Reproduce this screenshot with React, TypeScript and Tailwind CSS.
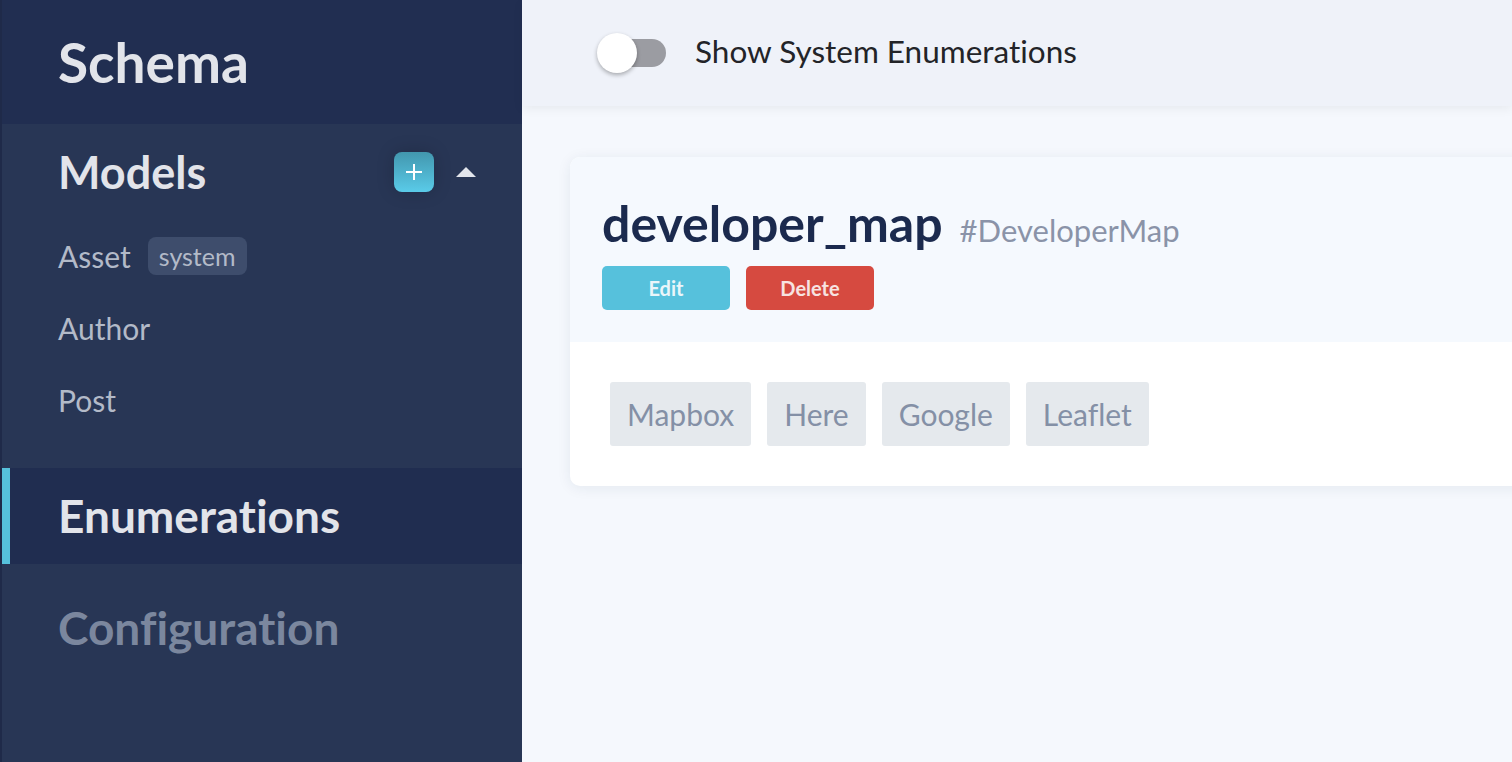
import React from "react";

function Toggle() {
  return (
    <div className="relative h-10 w-[69px] shrink-0">
      <div className="absolute left-[13px] top-[6px] h-[28px] w-[56px] rounded-full bg-[#9b9ca2]" />
      <div className="absolute left-0 top-0 h-10 w-10 rounded-full bg-white shadow-[0_2px_4px_rgba(0,0,0,0.3)]" />
    </div>
  );
}

export default function App() {
  const tags = ["Mapbox", "Here", "Google", "Leaflet"];
  return (
    <div className="flex h-[762px] w-full overflow-hidden font-['Lato',sans-serif] [font-variant-ligatures:none]">
      <aside className="flex w-[522px] shrink-0 flex-col border-l-2 border-[#1f2a49] bg-[#283655]">
        <div className="flex h-[124px] items-center bg-[#212e51] pl-[56px]">
          <span className="text-[55px] font-bold leading-none text-[#e2e4ea]">Schema</span>
        </div>
        <div className="flex h-[96px] items-center justify-between pl-[56px] pr-[46px]">
          <span className="text-[45px] font-bold leading-none text-[#e2e4ea]">Models</span>
          <div className="flex items-center gap-[22px]">
            <button className="flex h-10 w-10 items-center justify-center rounded-[8px] bg-gradient-to-b from-[#4297ae] to-[#5acbe9] shadow-[0_0_18px_rgba(0,0,0,0.18)]">
              <svg width="18" height="18" viewBox="0 0 18 18">
                <path d="M9 1v16M1 9h16" stroke="#ffffff" strokeWidth="2" />
              </svg>
            </button>
            <svg width="20" height="10" viewBox="0 0 20 10">
              <polygon points="10,0 20,10 0,10" fill="#e2e5ec" />
            </svg>
          </div>
        </div>
        <div className="flex h-[72px] items-center gap-[17px] pl-[56px]">
          <span className="text-[30px] leading-none text-[#b3bac8]">Asset</span>
          <span className="flex h-[38px] items-center rounded-[8px] bg-[#3e4d6c] px-[11px] text-[25px] leading-none text-[#b3bac8]">
            system
          </span>
        </div>
        <div className="flex h-[72px] items-center pl-[56px]">
          <span className="text-[30px] leading-none text-[#b3bac8]">Author</span>
        </div>
        <div className="flex h-[72px] items-center pl-[56px]">
          <span className="text-[30px] leading-none text-[#b3bac8]">Post</span>
        </div>
        <div className="mt-[32px] flex h-[96px] items-center bg-[#202d50]">
          <div className="h-full w-[8px] bg-[#56c1dc]" />
          <span className="pl-[48px] text-[46px] font-bold leading-none text-[#e2e4ea]">Enumerations</span>
        </div>
        <div className="mt-[16px] flex h-[96px] items-center pl-[56px]">
          <span className="text-[46px] font-bold leading-none text-[#7b879e]">Configuration</span>
        </div>
      </aside>
      <main className="flex min-w-0 flex-1 flex-col bg-[#f5f8fd]">
        <div className="relative z-10 flex h-[106px] shrink-0 items-center bg-[#eff2f9] pl-[75px] shadow-[0_3px_10px_rgba(0,0,0,0.06)]">
          <Toggle />
          <span className="ml-[29px] -translate-y-px text-[31.5px] leading-none text-[#232428]">Show System Enumerations</span>
        </div>
        <div className="pl-[48px] pt-[51px]">
          <div className="w-[1000px] overflow-hidden rounded-[10px] bg-white shadow-[0_2px_14px_rgba(30,45,80,0.08)]">
            <div className="bg-[#f5f9fe] px-[32px] pb-[32px] pt-[41px]">
              <div className="flex items-baseline">
                <span className="text-[50px] font-bold leading-none text-[#1b2a4e]">developer_map</span>
                <span className="ml-[17px] text-[31px] leading-none text-[#8a93a8]">#DeveloperMap</span>
              </div>
              <div className="mt-[18px] flex gap-[16px]">
                <button className="flex h-[44px] w-[128px] items-center justify-center rounded-[5px] bg-[#56c1dc] text-[20px] font-bold leading-none text-[#eaf6fa]">
                  Edit
                </button>
                <button className="flex h-[44px] w-[128px] items-center justify-center rounded-[5px] bg-[#d64a40] text-[20px] font-bold leading-none text-[#f7e3e1]">
                  Delete
                </button>
              </div>
            </div>
            <div className="flex gap-[16px] px-[40px] py-[40px]">
              {tags.map((t) => (
                <span
                  key={t}
                  className="flex h-[64px] items-center rounded-[3px] bg-[#e5e9ed] px-[17px] text-[30px] leading-none text-[#8490a6]"
                >
                  {t}
                </span>
              ))}
            </div>
          </div>
        </div>
      </main>
    </div>
  );
}
